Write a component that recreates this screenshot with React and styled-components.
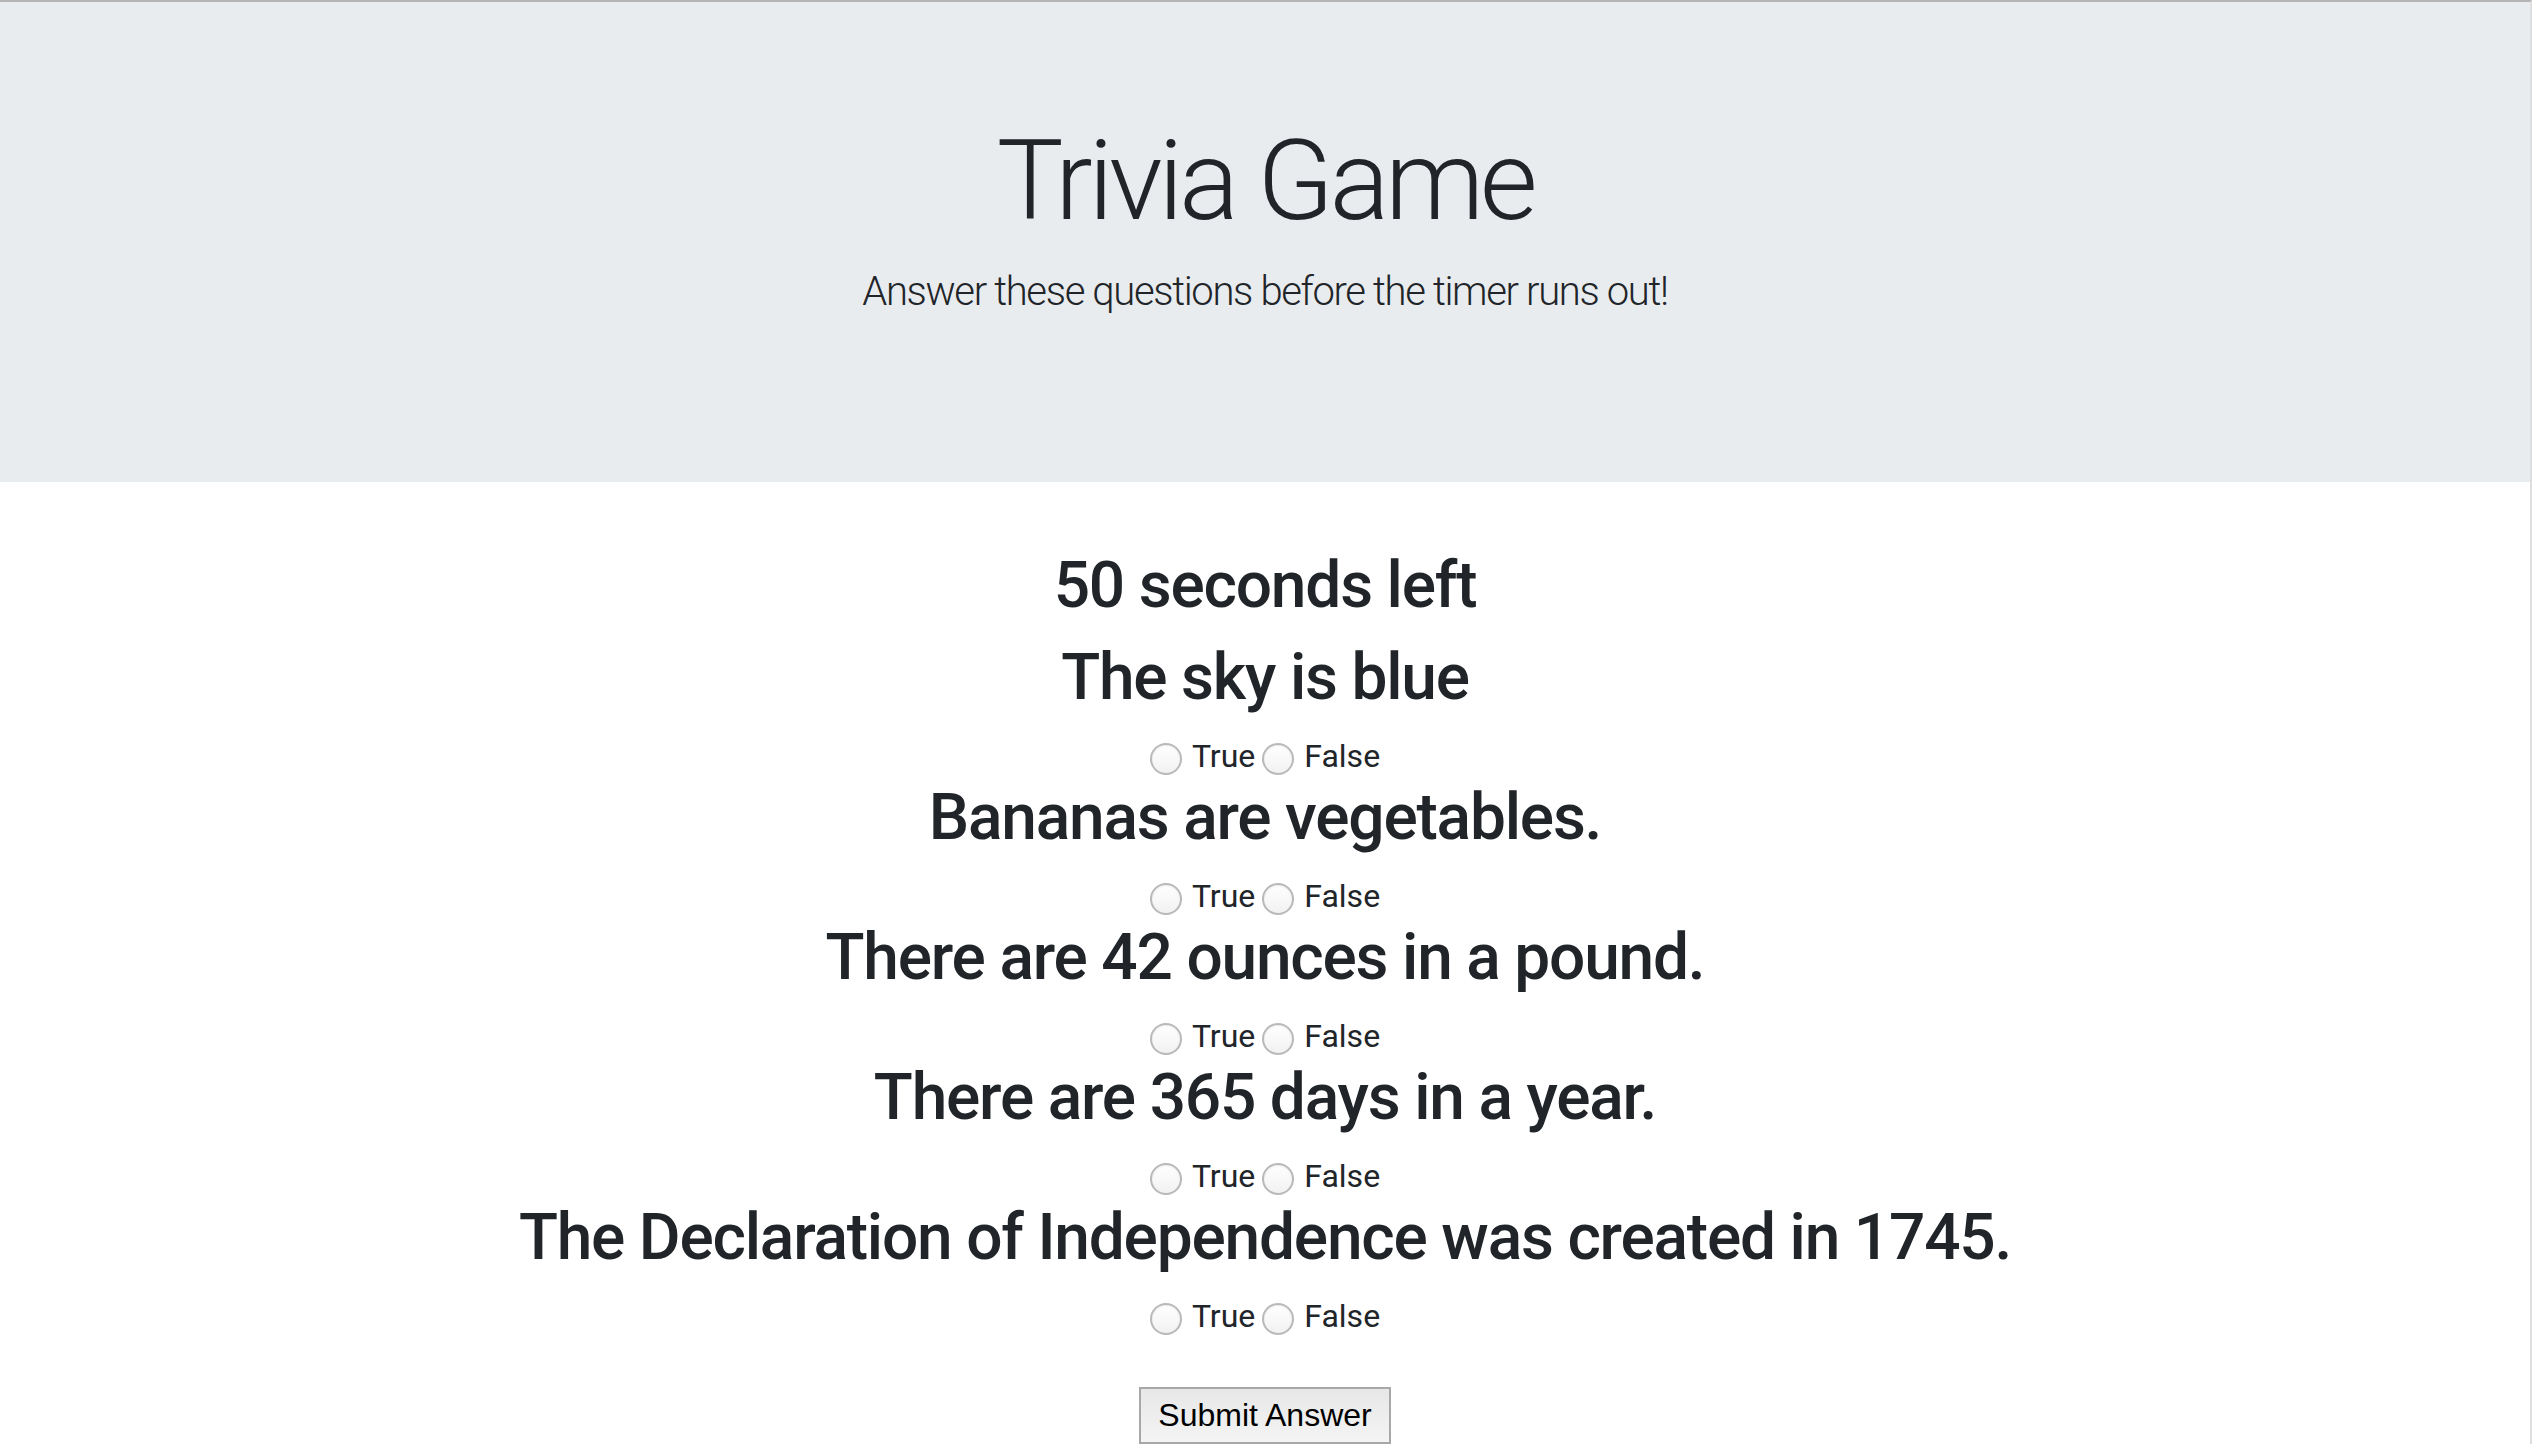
import React from 'react';
import styled, { createGlobalStyle } from 'styled-components';

const questions = [
  'The sky is blue',
  'Bananas are vegetables.',
  'There are 42 ounces in a pound.',
  'There are 365 days in a year.',
  'The Declaration of Independence was created in 1745.'
];

const GlobalStyle = createGlobalStyle`
  html, body {
    margin: 0;
    padding: 0;
    background: #fff;
  }

  body {
    font-family: Roboto, Inter, "Liberation Sans", sans-serif;
    color: #212529;
  }
`;

const Page = styled.div`
  min-height: 100vh;
  box-sizing: border-box;
  border-top: 2px solid #b4b4b4;
  border-right: 2px solid #dedede;
`;

const Jumbotron = styled.header`
  background: #e9ecef;
  padding: 112px 32px 160px;
  text-align: center;
`;

const Title = styled.h1`
  margin: 0 0 14px;
  font-size: 112px;
  font-weight: 300;
  line-height: 134.4px;
  letter-spacing: -4.5px;
`;

const Lead = styled.p`
  margin: 0;
  font-size: 40px;
  font-weight: 300;
  line-height: 60px;
  letter-spacing: -1.35px;
`;

const Main = styled.main`
  display: flex;
  flex-direction: column;
  align-items: center;
  padding-top: 66px;
  text-align: center;
`;

const Heading = styled.h2`
  margin: 0 0 16px;
  font-size: 64px;
  font-weight: 500;
  line-height: 76px;
  letter-spacing: -1.2px;
`;

const ChoiceRow = styled.div`
  display: flex;
  align-items: center;
  justify-content: center;
  height: 48px;
  font-size: 32px;
`;

const Choice = styled.label`
  display: flex;
  align-items: center;
  margin-left: ${props => (props.first ? '0' : '7px')};
`;

const Radio = styled.input.attrs({ type: 'radio' })`
  appearance: none;
  box-sizing: border-box;
  width: 32px;
  height: 32px;
  margin: 6px 10px 0 0;
  border-radius: 50%;
  border: 2px solid #b9b9b9;
  background: linear-gradient(#ffffff, #f1f1f1);
  box-shadow: inset 0 1px 2px rgba(0, 0, 0, 0.08);
`;

const SubmitButton = styled.button`
  margin-top: 47px;
  height: 57px;
  padding: 0 17px;
  border: 2px solid #a8a8a8;
  border-radius: 0;
  background: linear-gradient(#e7e7e7, #f4f4f4);
  color: #000;
  font-family: "Liberation Sans", Arial, sans-serif;
  font-size: 32px;
`;

const Question = ({ text, index }) => (
  <>
    <Heading>{text}</Heading>
    <ChoiceRow>
      <Choice first>
        <Radio name={`q${index}`} value="true" />
        True
      </Choice>
      <Choice>
        <Radio name={`q${index}`} value="false" />
        False
      </Choice>
    </ChoiceRow>
  </>
);

const App = () => (
  <Page>
    <GlobalStyle />
    <Jumbotron>
      <Title>Trivia Game</Title>
      <Lead>Answer these questions before the timer runs out!</Lead>
    </Jumbotron>
    <Main>
      <Heading>50 seconds left</Heading>
      {questions.map((q, i) => (
        <Question key={q} text={q} index={i} />
      ))}
      <SubmitButton>Submit Answer</SubmitButton>
    </Main>
  </Page>
);

export default App;
